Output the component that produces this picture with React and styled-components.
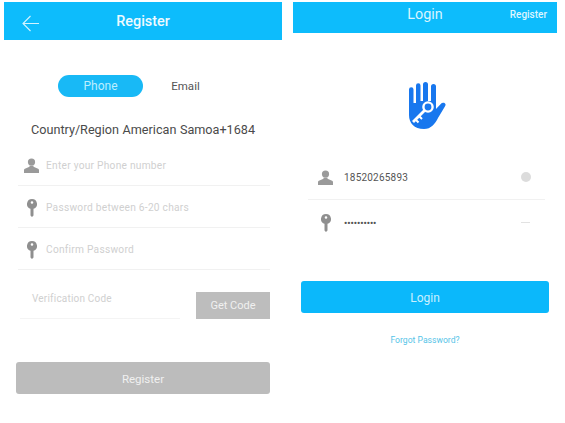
import styled, { createGlobalStyle } from 'styled-components';

const Global = createGlobalStyle`
  html, body { margin: 0; padding: 0; background: #fff; }
  body { font-family: "Roboto", "Liberation Sans", sans-serif; }
`;

const Page = styled.div`
  width: 565px;
  height: 423px;
  overflow: hidden;
  display: flex;
  align-items: flex-start;
  padding: 2px 0 0 4px;
  box-sizing: border-box;
`;

const Panel = styled.section`
  width: ${(p) => p.$width}px;
  margin-right: ${(p) => p.$gap || 0}px;
  flex: none;
  display: flex;
  flex-direction: column;
`;

const Header = styled.header`
  height: ${(p) => p.$height}px;
  background: #0dbcfc;
  color: #fff;
  position: relative;
  display: flex;
  align-items: ${(p) => p.$top ? 'flex-start' : 'center'};
  justify-content: center;
`;

const Title = styled.h1`
  margin: ${(p) => p.$top ? '4px 0 0' : '0'};
  font-size: 14.4px;
  line-height: 17px;
  font-weight: ${(p) => p.$light ? 400 : 500};
  color: ${(p) => p.$light ? '#d8f5ff' : '#eefaff'};
`;

const Back = styled.svg`
  position: absolute;
  left: 17px;
  top: 11px;
  width: 20px;
  height: 20px;
`;

const HeaderLink = styled.a`
  position: absolute;
  right: 10px;
  top: 7px;
  font-size: 10px;
  line-height: 11px;
  font-weight: 500;
  color: #dcf5ff;
`;

const Tabs = styled.div`
  display: flex;
  margin: 35px 0 0 54px;
  align-items: center;
`;

const Tab = styled.div`
  width: 85px;
  height: 22px;
  border-radius: 11px;
  display: flex;
  align-items: center;
  justify-content: center;
  font-size: ${(p) => p.$active ? 12 : 11.5}px;
  background: ${(p) => p.$active ? '#18b9f6' : 'transparent'};
  color: ${(p) => p.$active ? '#bdeeff' : '#555'};
`;

const Country = styled.div`
  margin: 23px 0 0 27px;
  font-size: 12.65px;
  line-height: 20px;
  color: #4a4a4a;
  white-space: nowrap;
  word-spacing: 0.4px;
`;

const FieldRow = styled.div`
  height: ${(p) => p.$height}px;
  margin: ${(p) => p.$margin};
  box-sizing: border-box;
  border-bottom: 1px solid ${(p) => p.$noLine ? 'transparent' : '#f1f1f1'};
  display: flex;
  align-items: center;
  gap: ${(p) => p.$gap}px;
  padding-left: ${(p) => p.$pad}px;
  padding-top: ${(p) => p.$drop || 0}px;
`;

const IconBox = styled.div`
  width: 15px;
  display: flex;
  justify-content: center;
  flex: none;
`;

const Placeholder = styled.span`
  font-size: 10.2px;
  color: #d0d0d0;
  letter-spacing: 0.25px;
`;

const Value = styled.span`
  font-size: 10px;
  color: #555;
  flex: 1;
  letter-spacing: 0.2px;
`;

const Dots = styled(Value)`
  font-size: 9px;
  font-weight: 700;
  letter-spacing: 0;
`;

const Clear = styled.span`
  width: 10px;
  height: 10px;
  border-radius: 50%;
  background: #dcdcdc;
  margin-right: 14px;
`;

const Dash = styled.span`
  width: 9px;
  height: 1px;
  background: #e2e2e2;
  margin-right: 15px;
`;

const CodeRow = styled.div`
  display: flex;
  align-items: flex-end;
  margin: 0 12px 0 16px;
`;

const CodeField = styled.div`
  width: 160px;
  height: 49px;
  box-sizing: border-box;
  border-bottom: 1px solid #f4f4f4;
  padding: 22px 0 0 12px;
  font-size: 10px;
  line-height: 13px;
  letter-spacing: 0.2px;
  color: #d0d0d0;
`;

const CodeButton = styled.button`
  width: 74px;
  height: 27px;
  margin-left: 16px;
  border: 0;
  padding: 0;
  background: #bdbdbd;
  color: #f0f0f0;
  font: 400 11px "Roboto", sans-serif;
`;

const Submit = styled.button`
  display: block;
  height: 32px;
  margin: ${(p) => p.$margin};
  border: 0;
  padding: 1px 0 0;
  border-radius: 3px;
  background: ${(p) => p.$blue ? '#0bb8fb' : '#bcbcbc'};
  color: ${(p) => p.$blue ? '#c9f0ff' : '#f0f0f0'};
  font: 400 ${(p) => p.$blue ? 12 : 11.5}px "Roboto", sans-serif;
`;

const Logo = styled.div`
  display: flex;
  justify-content: center;
  margin-top: 48px;
  padding-left: 4px;
`;

const Forgot = styled.a`
  margin-top: 22px;
  text-align: center;
  font-size: 8.6px;
  line-height: 11px;
  color: #55c4e8;
`;

const Person = () => (
  <svg width="15" height="15" viewBox="0 0 15 15" fill="#9a9a9a">
    <circle cx="7.5" cy="4" r="3.6" />
    <path d="M5.5 7.5h4v1.3l4.6 2c.6.3.9.7.9 1.4V15H0v-2.800c0-.7.3-1.100.9-1.400l4.600-2z" />
  </svg>
);

const Key = () => (
  <svg width="10" height="18" viewBox="0 0 10 18" fill="#8f8f8f">
    <path fillRule="evenodd" d="M5 0a5 5 0 0 1 1.500 9.770V16.500L5 18l-1.500-1.500V9.770A5 5 0 0 1 5 0zm0 2.200a1.300 1.300 0 1 0 0 2.600 1.300 1.300 0 0 0 0-2.600z" />
  </svg>
);

const Hand = () => (
  <svg width="40" height="48" viewBox="0 0 40 48">
    <path fill="#1877ee" d="M2 8.500a2.200 2.200 0 0 1 4.500 0V22H9V4.500a2.250 2.250 0 0 1 4.500 0V20H16V3.500a2.500 2.500 0 0 1 5 0V20h3V5.500a2.500 2.500 0 0 1 5 0V28l4.500-4.800c1.300-1.400 3-1.700 4.300-.9 1.100.7 1 2 .1 3.100L31 37c-3 6-7 11-14 11C7 48 2 42 2 34z" />
    <circle cx="21" cy="26" r="4.600" fill="none" stroke="#fff" strokeWidth="2.400" />
    <path fill="none" stroke="#fff" strokeWidth="2.800" d="M17.500 29.500 6 41" />
    <path fill="none" stroke="#fff" strokeWidth="2" d="M8.500 38.500l3 3M12 35l3 3" />
  </svg>
);

export default function App() {
  return (
    <Page>
      <Global />
      <Panel $width={278} $gap={11}>
        <Header $height={38}>
          <Back viewBox="0 0 20 20" fill="none" stroke="#d3f3ff" strokeWidth="1.100">
            <path d="M18 10.500H2M9.500 3 2 10.500 9.500 18" />
          </Back>
          <Title>Register</Title>
        </Header>
        <Tabs>
          <Tab $active>Phone</Tab>
          <Tab>Email</Tab>
        </Tabs>
        <Country>Country/Region American Samoa+1684</Country>
        <FieldRow $height={46} $margin="0 12px 0 14px" $gap={7} $pad={6} $drop={5}>
          <IconBox><Person /></IconBox>
          <Placeholder>Enter your Phone number</Placeholder>
        </FieldRow>
        <FieldRow $height={42} $margin="0 12px 0 14px" $gap={7} $pad={6} $drop={2}>
          <IconBox><Key /></IconBox>
          <Placeholder>Password between 6-20 chars</Placeholder>
        </FieldRow>
        <FieldRow $height={42} $margin="0 12px 0 14px" $gap={7} $pad={6} $drop={2}>
          <IconBox><Key /></IconBox>
          <Placeholder>Confirm Password</Placeholder>
        </FieldRow>
        <CodeRow>
          <CodeField>Verification Code</CodeField>
          <CodeButton>Get Code</CodeButton>
        </CodeRow>
        <Submit $margin="43px 12px 0 12px">Register</Submit>
      </Panel>
      <Panel $width={264}>
        <Header $height={31} $top>
          <Title $top $light>Login</Title>
          <HeaderLink>Register</HeaderLink>
        </Header>
        <Logo><Hand /></Logo>
        <FieldRow $height={71} $margin="0 12px 0 15px" $gap={11} $pad={10} $drop={26}>
          <IconBox><Person /></IconBox>
          <Value>18520265893</Value>
          <Clear />
        </FieldRow>
        <FieldRow $height={46} $margin="0 12px 0 15px" $gap={11} $pad={10} $noLine>
          <IconBox><Key /></IconBox>
          <Dots>••••••••••</Dots>
          <Dash />
        </FieldRow>
        <Submit $blue $margin="35px 8px 0 8px">Login</Submit>
        <Forgot>Forgot Password?</Forgot>
      </Panel>
    </Page>
  );
}
